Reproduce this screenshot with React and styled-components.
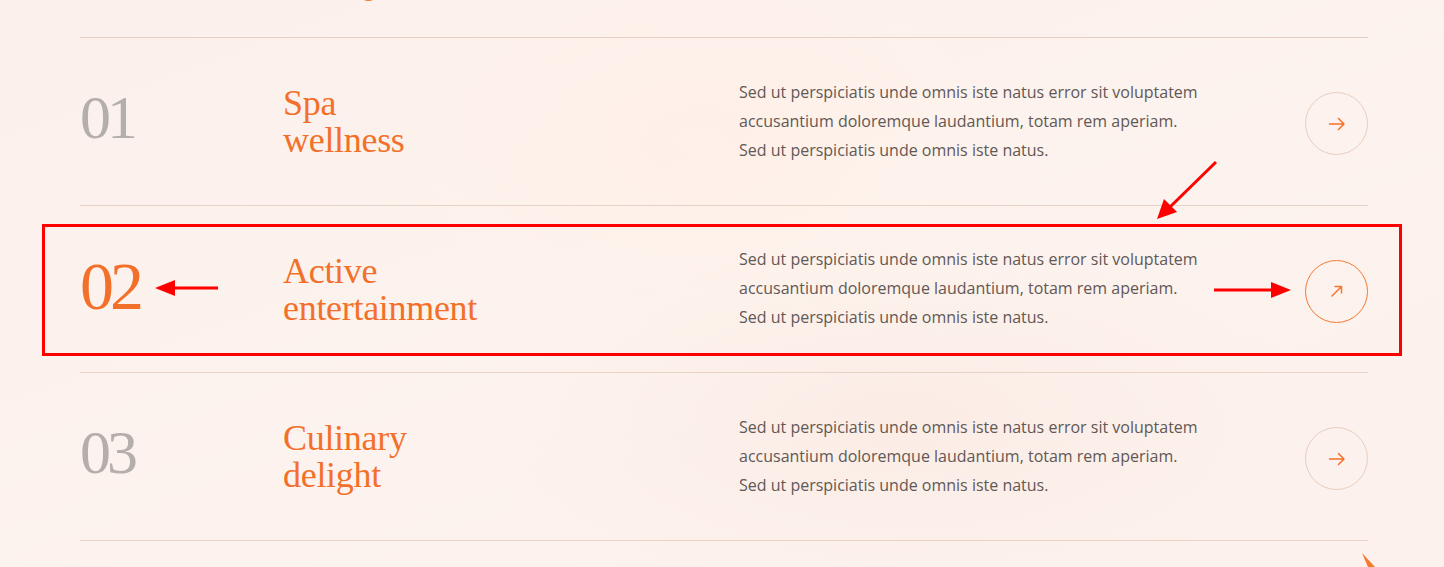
import React from "react";
import styled, { createGlobalStyle } from "styled-components";

const GlobalStyle = createGlobalStyle`
  html, body {
    margin: 0;
    padding: 0;
    height: 567px;
    overflow: hidden;
  }
  body {
    background:
      radial-gradient(ellipse 500px 300px at 700px 140px, rgba(255, 240, 232, 0.9), transparent 70%),
      radial-gradient(ellipse 600px 260px at 900px 420px, rgba(250, 232, 224, 0.6), transparent 70%),
      linear-gradient(160deg, #fbf0eb 0%, #fdf3ee 50%, #fcf1ec 100%);
  }
`;

const Page = styled.div`
  position: relative;
  height: 567px;
  padding: 37px 76px 0 80px;
  box-sizing: border-box;
`;

const List = styled.div`
  border-top: 1px solid #e6cfc0;
`;

const Row = styled.div`
  display: grid;
  grid-template-columns: 203px 456px 1fr 63px;
  align-items: center;
  height: 166.6px;
  border-bottom: 1px solid #e8d4c7;
`;

const Number = styled.div`
  font-family: "Liberation Serif", "Times New Roman", serif;
  font-size: ${(p) => (p.$active ? "68px" : "62px")};
  letter-spacing: -4px;
  line-height: 1;
  color: ${(p) => (p.$active ? "#f3702a" : "#b4afab")};
  padding-bottom: ${(p) => (p.$active ? "6px" : "8px")};
`;

const Title = styled.div`
  font-family: "Liberation Serif", "Times New Roman", serif;
  font-size: 36px;
  line-height: 37px;
  letter-spacing: -0.3px;
  color: #f3702a;
  padding-top: 2px;
`;

const Desc = styled.p`
  margin: 0;
  font-family: "Open Sans", "Noto Sans", sans-serif;
  font-size: 16px;
  line-height: 29px;
  color: #625855;
`;

const CircleButton = styled.button`
  width: 63px;
  height: 63px;
  margin-top: 5px;
  border-radius: 50%;
  border: 1px solid ${(p) => (p.$active ? "#f3792f" : "#e8cdbd")};
  background: transparent;
  display: flex;
  align-items: center;
  justify-content: center;
  padding: 0;
  cursor: pointer;
`;

const Overlay = styled.svg`
  position: absolute;
  left: 0;
  top: 0;
  pointer-events: none;
`;

const rows = [
  { num: "01", title: ["Spa", "wellness"] },
  { num: "02", title: ["Active", "entertainment"], active: true },
  { num: "03", title: ["Culinary", "delight"] },
];

const text = [
  "Sed ut perspiciatis unde omnis iste natus error sit voluptatem",
  "accusantium doloremque laudantium, totam rem aperiam.",
  "Sed ut perspiciatis unde omnis iste natus.",
];

const ArrowIcon = ({ diagonal }) =>
  diagonal ? (
    <svg width="14" height="14" viewBox="0 0 14 14" fill="none">
      <path d="M2 12 L11.5 2.5 M5 2.5 H11.5 V9" stroke="#f3792f" strokeWidth="1.5" strokeLinecap="round" strokeLinejoin="round" />
    </svg>
  ) : (
    <svg width="18" height="14" viewBox="0 0 18 14" fill="none">
      <path d="M1.5 7 H16 M10.5 1.5 L16 7 L10.5 12.5" stroke="#f3702a" strokeWidth="1.5" strokeLinecap="round" strokeLinejoin="round" />
    </svg>
  );

export default function App() {
  return (
    <>
      <GlobalStyle />
      <Page>
        <List>
          {rows.map((r) => (
            <Row key={r.num}>
              <Number $active={r.active}>{r.num}</Number>
              <Title>
                {r.title[0]}
                <br />
                {r.title[1]}
              </Title>
              <Desc>
                {text[0]}
                <br />
                {text[1]}
                <br />
                {text[2]}
              </Desc>
              <CircleButton $active={r.active} aria-label="Open">
                <ArrowIcon diagonal={r.active} />
              </CircleButton>
            </Row>
          ))}
        </List>
        <Overlay width="1444" height="567" viewBox="0 0 1444 567">
          <rect x="43.5" y="225.5" width="1357" height="129" fill="none" stroke="#ff0000" strokeWidth="3" />
          <line x1="218" y1="288" x2="172" y2="288" stroke="#ff0000" strokeWidth="3" />
          <polygon points="155,288 175,280 175,296" fill="#ff0000" />
          <line x1="1214" y1="290" x2="1274" y2="290" stroke="#ff0000" strokeWidth="3" />
          <polygon points="1291,290 1271,282 1271,298" fill="#ff0000" />
          <line x1="1216" y1="162" x2="1170" y2="207" stroke="#ff0000" strokeWidth="3" />
          <polygon points="1157,219 1164,199 1177,212" fill="#ff0000" />
          <polygon points="1362,553 1375,567 1368,567" fill="#f47a2e" />
          <path d="M364 0 Q368 2 373 0 Z" fill="#f3702a" />
        </Overlay>
      </Page>
    </>
  );
}
